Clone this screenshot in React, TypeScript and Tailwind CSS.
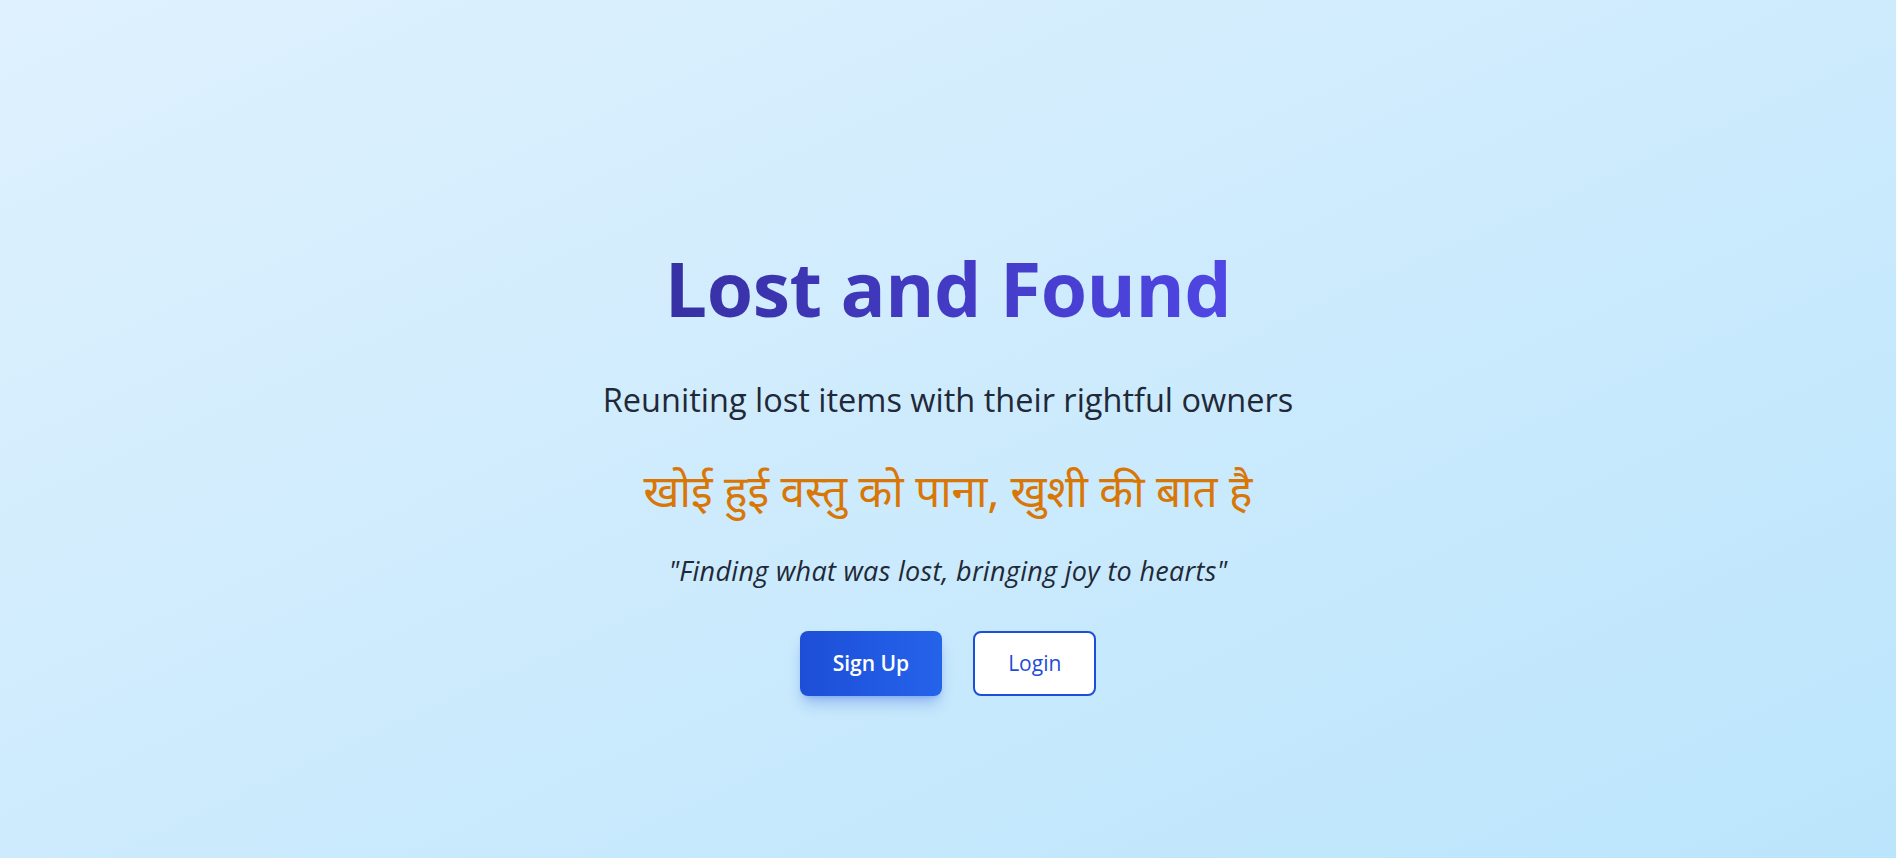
export default function App() {
  return (
    <div className="min-h-[858px] w-full bg-gradient-to-br from-[#dff1fe] to-[#bbe5fc] flex flex-col items-center pt-[248px] font-['Open_Sans',sans-serif]">
      <h1 className="text-[75px] leading-[80px] font-bold tracking-[-0.5px] bg-gradient-to-r from-[#3730a3] to-[#4f46e5] bg-clip-text text-transparent">
        Lost and Found
      </h1>
      <p className="mt-[52px] text-[32.5px] leading-[40px] text-[#1f2937]">
        Reuniting lost items with their rightful owners
      </p>
      <p className="mt-[49px] text-[44px] leading-[56px] text-[#d97706] font-['Noto_Sans_Devanagari','Noto_Sans',sans-serif]">
        खोई हुई वस्तु को पाना, खुशी की बात है
      </p>
      <p className="mt-[30px] text-[27px] leading-[32px] italic tracking-[0.3px] text-[#1f2937]">
        "Finding what was lost, bringing joy to hearts"
      </p>
      <div className="mt-[44px] flex gap-[31px]">
        <button className="h-[65px] px-[33px] rounded-[8px] bg-gradient-to-r from-[#1d4ed8] to-[#2563eb] text-white text-[21px] font-semibold shadow-lg shadow-[#1d4ed8]/30">
          Sign Up
        </button>
        <button className="h-[65px] px-[33px] rounded-[8px] bg-white border-2 border-[#1d4ed8] text-[#1d4ed8] text-[21px] font-medium">
          Login
        </button>
      </div>
    </div>
  );
}
